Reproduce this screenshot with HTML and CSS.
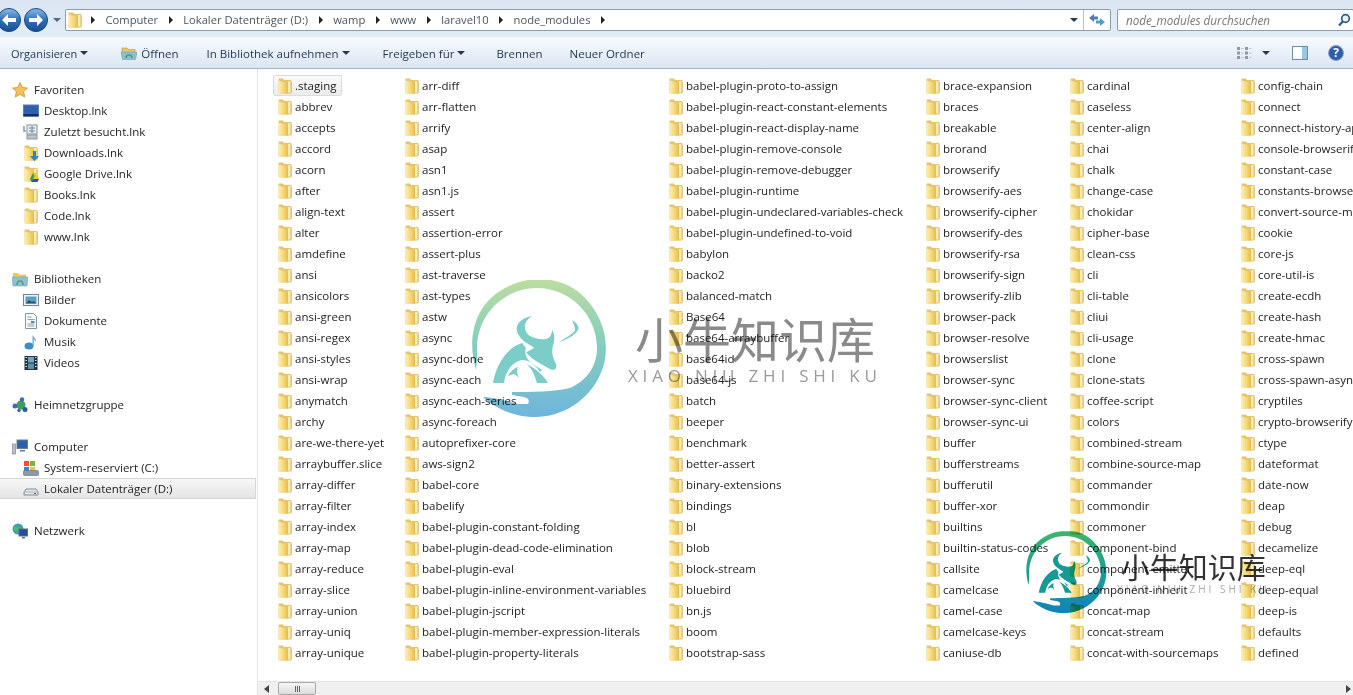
FILE: index.html
```html
<!DOCTYPE html>
<html lang="de">
<head>
	<meta charset="utf-8">
	<title>node_modules</title>
	<link rel="stylesheet" href="styles.css">
</head>
<body>
	<svg class="defs" width="0" height="0">
		<defs>
			<linearGradient id="fdBody" x1="0" y1="0" x2="1" y2="0">
				<stop offset="0" stop-color="#fbefb4"/>
				<stop offset=".5" stop-color="#f5da7c"/>
				<stop offset=".85" stop-color="#eec552"/>
				<stop offset="1" stop-color="#e2b94e"/>
			</linearGradient>
			<linearGradient id="softRing" gradientUnits="userSpaceOnUse" x1="0" y1="0" x2="0" y2="137">
				<stop offset="0" stop-color="#bcdda0"/>
				<stop offset=".45" stop-color="#84cfbd"/>
				<stop offset="1" stop-color="#6fb5dc"/>
			</linearGradient>
			<linearGradient id="deepRing" gradientUnits="userSpaceOnUse" x1="0" y1="0" x2="0" y2="137">
				<stop offset="0" stop-color="#3fb56b"/>
				<stop offset=".5" stop-color="#16a096"/>
				<stop offset="1" stop-color="#1382b8"/>
			</linearGradient>
			<linearGradient id="nav" x1="0" y1="0" x2="0" y2="1">
				<stop offset="0" stop-color="#8fbbe6"/>
				<stop offset=".5" stop-color="#2f6fb5"/>
				<stop offset="1" stop-color="#1a4f92"/>
			</linearGradient>
			<symbol id="folder" viewBox="0 0 16 16">
				<path d="M1.500 1.500c0-.6.4-1 1-1h3.500l1 1.500h6.500c.6 0 1 .4 1 1V14.500c0 .6-.4 1-1 1H2.500c-.6 0-1-.4-1-1z" fill="#e6c46a"/>
				<path d="M11 3h2.700v11.500H11z" fill="#f8ecb8"/>
				<path d="M1.500 2.500 10 4.800c.6.200 1 .6 1 1.200V15.500H2.500c-.6 0-1-.4-1-1z" fill="url(#fdBody)"/>
				<path d="M14.200 3.500v11" stroke="#d2b266" stroke-width=".8" fill="none"/>
			</symbol>
			<symbol id="markring" viewBox="0 0 137 138">
				<path d="M6 90C-3 60 3 25 35 8C60-6 95-4 115 18C135 38 142 70 130 95C118 122 90 138 62 137C42 136 25 128 13 117C22 117 36 121 48 124L58 124C60 120 58 118 54 117L42 115L42 112C60 112 85 112 100 108C118 100 127 85 127 68C127 35 100 8 67 8C34 8 7 35 7 68C7 75 7 83 6 90z"/>
			</symbol>
			<symbol id="bull" viewBox="0 0 137 138">
				<path d="M62 36C50 38 44 46 48 54C52 62 60 64 64 68C60 70 58 72 56 72C60 78 70 84 82 90C86 90 87 87 86 84C83 78 81 72 83 66C85 60 85 54 82 50C82 54 80 58 76 59C70 60 64 58 60 56C54 52 52 42 62 36z"/>
				<path d="M52 63C38 67 26 84 23 103L34 103C35 92 42 82 52 80C60 80 66 86 70 92L72 90L60 82C56 78 54 72 56 68z"/>
				<path d="M56 84C62 88 64 94 67 103L78 103C74 96 66 88 56 84z"/>
				<path d="M38 96C40 92 44 88 48 87C46 92 48 96 50 98L44 94z"/>
				<path d="M102 40C106 42 110 47 108 50C105 56 96 59 88 63C94 58 104 54 105 50C105 46 103 43 102 40z"/>
			</symbol>
		</defs>
	</svg>

	<div class="window">
		<div class="addressrow">
			<div class="navbtns">
				<svg class="navbtn" viewBox="0 0 24 24"><circle cx="12" cy="12" r="11.500" fill="url(#nav)" stroke="#174880"/><path d="M5 12l6-6v4h8v4h-8v4z" fill="#fff"/></svg>
				<svg class="navbtn" viewBox="0 0 24 24"><circle cx="12" cy="12" r="11.500" fill="url(#nav)" stroke="#174880"/><path d="M19 12l-6-6v4H5v4h8v4z" fill="#fff"/></svg>
			</div>
			<span class="caret navcaret"></span>
			<div class="address">
				<svg class="ic"><use href="#folder"/></svg>
				<div class="crumbs">
					<i class="sep"></i><span>Computer</span>
					<i class="sep"></i><span>Lokaler Datenträger (D:)</span>
					<i class="sep"></i><span>wamp</span>
					<i class="sep"></i><span>www</span>
					<i class="sep"></i><span>laravel10</span>
					<i class="sep"></i><span>node_modules</span>
					<i class="sep"></i>
				</div>
				<span class="caret dark"></span>
				<div class="refresh">
					<svg width="18" height="14" viewBox="0 0 18 14"><path d="M1 5l5-4v2.500h4v3H6V9z" fill="#4d7fae"/><path d="M17 9l-5 4v-2.500H8v-3h4V5z" fill="#4d9fc8"/></svg>
				</div>
			</div>
			<div class="search">
				<span>node_modules durchsuchen</span>
				<svg width="14" height="14" viewBox="0 0 14 14"><circle cx="8.500" cy="5.500" r="3.800" fill="#eaf3fb" stroke="#2c5c86" stroke-width="1.700"/><path d="M5.800 8.500 2 12.500" stroke="#2c5c86" stroke-width="2.200"/></svg>
			</div>
		</div>

		<div class="commandbar">
			<span class="cmd org">Organisieren <span class="caret dark"></span></span>
			<span class="cmd open">
				<svg class="ic" viewBox="0 0 16 16"><path d="M1 3h5l1 1.500h7V8H1z" fill="#e9c766" stroke="#b39440" stroke-width=".6"/><path d="M0 7h16l-1.500 7.500h-13z" fill="#8cc0d0" stroke="#6f9fae" stroke-width=".6"/><path d="M5 13c0-2 1-3 3-3s3 1 3 3" fill="none" stroke="#4e9a68" stroke-width="1.600"/></svg>
				Öffnen
			</span>
			<span class="cmd lib">In Bibliothek aufnehmen <span class="caret dark"></span></span>
			<span class="cmd share">Freigeben für <span class="caret dark"></span></span>
			<span class="cmd burn">Brennen</span>
			<span class="cmd newdir">Neuer Ordner</span>
			<div class="cmdright">
				<svg width="16" height="14" viewBox="0 0 16 14"><g fill="#8d99a4"><rect x="1" y="1" width="3" height="3"/><rect x="1" y="5.500" width="3" height="3"/><rect x="1" y="10" width="3" height="3"/><rect x="9" y="1" width="3" height="3"/><rect x="9" y="5.500" width="3" height="3"/><rect x="9" y="10" width="3" height="3"/></g><g fill="#b8c4ce"><rect x="5" y="2" width="2.500" height="1"/><rect x="5" y="6.500" width="2.500" height="1"/><rect x="5" y="11" width="2.500" height="1"/><rect x="13" y="2" width="2.500" height="1"/><rect x="13" y="6.500" width="2.500" height="1"/><rect x="13" y="11" width="2.500" height="1"/></g></svg>
				<span class="caret dark viewcaret"></span>
				<svg class="panebtn" width="16" height="14" viewBox="0 0 16 14"><rect x=".5" y=".5" width="15" height="13" fill="#fff" stroke="#6f8ba5"/><rect x="10" y="1" width="5" height="12" fill="#9ac6e6"/></svg>
				<svg class="helpbtn" width="16" height="16" viewBox="0 0 16 16"><circle cx="8" cy="8" r="7.500" fill="#2f5fa8" stroke="#8ea4cc"/><text x="8" y="12" text-anchor="middle" class="helpmark">?</text></svg>
			</div>
		</div>

		<div class="content">
			<nav class="sidebar">
				<div class="group">
					<div class="head">
						<svg class="ic" viewBox="0 0 16 16"><path d="M8 .5l2.300 5 5.200.6-3.900 3.500 1.100 5.400L8 12.300 3.300 15l1.100-5.400L.5 6.100l5.200-.6z" fill="#f5c25c" stroke="#d0893a" stroke-width=".8"/></svg>Favoriten
					</div>
					<div class="link"><svg class="ic" viewBox="0 0 16 16"><rect x=".5" y="2" width="15" height="11" fill="#2f5fb0" stroke="#5c7ea8"/><rect x=".5" y="11" width="15" height="2.500" fill="#16305f"/></svg>Desktop.lnk</div>
					<div class="link"><svg class="ic" viewBox="0 0 16 16"><rect x="4" y="1" width="10" height="9" fill="#e9eef3" stroke="#7f8f9f"/><path d="M6 4h6M6 7h6M9 2v7" stroke="#6d8296"/><rect x="4" y="11" width="10" height="4" fill="#b9c3cc" stroke="#8a97a3"/><path d="M1 2v5h2" fill="none" stroke="#8a9aa8" stroke-width="1.500"/></svg>Zuletzt besucht.lnk</div>
					<div class="link"><svg class="ic"><use href="#folder"/></svg><svg class="badge" width="9" height="10" viewBox="0 0 9 10"><path d="M3 0h3v5h3L4.500 10 0 5h3z" fill="#2e82bd"/></svg>Downloads.lnk</div>
					<div class="link"><svg class="ic"><use href="#folder"/></svg><svg class="badge" width="9" height="9" viewBox="0 0 9 9"><path d="M3 0h3l3 6H4z" fill="#f3c622"/><path d="M3 0 0 6l1.500 3 3-6z" fill="#2f9e52"/><path d="M1.500 9h6L9 6H3z" fill="#2352b8"/></svg>Google Drive.lnk</div>
					<div class="link"><svg class="ic"><use href="#folder"/></svg>Books.lnk</div>
					<div class="link"><svg class="ic"><use href="#folder"/></svg>Code.lnk</div>
					<div class="link"><svg class="ic"><use href="#folder"/></svg>www.lnk</div>
				</div>
				<div class="group">
					<div class="head">
						<svg class="ic" viewBox="0 0 16 16"><path d="M1 2h5l1 1.500h7V8H1z" fill="#e9c766"/><path d="M0 6h16l-1 9H1z" fill="#8fc0cf" stroke="#7aa8b6" stroke-width=".6"/><path d="M5 14c0-3 1-4 3-4s3 1 3 4" fill="none" stroke="#59967a" stroke-width="1.500"/></svg>Bibliotheken
					</div>
					<div class="link"><svg class="ic" viewBox="0 0 16 16"><rect x=".5" y="2.500" width="15" height="11" fill="#eef3f7" stroke="#6f8496"/><rect x="2.500" y="4.500" width="11" height="7" fill="#5f9fc4"/><path d="M2.500 11.500 6 8l3 2 2-1 2.500 2.500z" fill="#2b536c"/></svg>Bilder</div>
					<div class="link"><svg class="ic" viewBox="0 0 16 16"><path d="M2.500.5h8l3 3v12h-11z" fill="#fbfcfd" stroke="#8493a0"/><path d="M4.500 4h4M4.500 6.500h7M4.500 11h7M4.500 13h7" stroke="#8aa0b2"/><rect x="8" y="8" width="3.500" height="2" fill="#4f86b8"/></svg>Dokumente</div>
					<div class="link"><svg class="ic" viewBox="0 0 16 16"><ellipse cx="6" cy="12" rx="4.500" ry="3.500" fill="#3d8dc7"/><path d="M9.500 12V1c1 2.500 4 3 3.500 7-.5-2-2-2.500-2.200-2.500V12z" fill="#62aed8"/></svg>Musik</div>
					<div class="link"><svg class="ic" viewBox="0 0 16 16"><rect x="1.500" y="1" width="13" height="14" fill="#26323c"/><rect x="5" y="2" width="6" height="5.500" fill="#6fa7c9"/><rect x="5" y="8.500" width="6" height="5.500" fill="#5a8fb0"/><path d="M2.500 2.500h1.500M2.500 5.500h1.500M2.500 8.500h1.500M2.500 11.500h1.500M12 2.500h1.500M12 5.500h1.500M12 8.500h1.500M12 11.500h1.500" stroke="#dde5ea"/></svg>Videos</div>
				</div>
				<div class="group">
					<div class="head">
						<svg class="ic" viewBox="0 0 16 16"><circle cx="9" cy="8" r="4.500" fill="#3f9e5c"/><circle cx="3" cy="9" r="2.500" fill="#3a6db5"/><circle cx="10" cy="2.500" r="2.200" fill="#3a6db5"/><circle cx="13" cy="12.500" r="2.500" fill="#2c5a9e"/><circle cx="7" cy="13.500" r="1.800" fill="#3a6db5"/></svg>Heimnetzgruppe
					</div>
				</div>
				<div class="group">
					<div class="head">
						<svg class="ic" viewBox="0 0 16 16"><rect x="5" y="1" width="10.500" height="8.500" fill="#2d5fae" stroke="#6d7f90"/><path d="M8 11h5v1.500H8z" fill="#6c7c8a"/><rect x=".5" y="5" width="3" height="10" fill="#b6c0c9" stroke="#6f7e8b" stroke-width=".6"/></svg>Computer
					</div>
					<div class="link"><svg class="ic" viewBox="0 0 16 16"><rect x="1" y="1" width="5" height="5" fill="#e2553a"/><rect x="7" y="1" width="5" height="5" fill="#7fb23f"/><rect x="1" y="7" width="5" height="4" fill="#3e83c8"/><rect x="7" y="7" width="5" height="4" fill="#f0c33c"/><rect x=".5" y="10.500" width="15" height="5" rx="1" fill="#8d9aa5" stroke="#5f6d78" stroke-width=".6"/></svg>System-reserviert (C:)</div>
					<div class="link active"><svg class="ic" viewBox="0 0 16 16"><path d="M3 8h10l2 3v3H1v-3z" fill="#e4e8eb" stroke="#7f8a93"/><path d="M1 11h14" stroke="#aab3ba"/><rect x="11" y="12" width="2" height="1" fill="#59646d"/></svg>Lokaler Datenträger (D:)</div>
				</div>
				<div class="group">
					<div class="head">
						<svg class="ic" viewBox="0 0 16 16"><circle cx="6" cy="6" r="5.500" fill="#3b9fb5"/><path d="M2 4c2-1 3 1 5 0s2 3 0 4-3 0-5-1z" fill="#5cb36a"/><rect x="7" y="6" width="8.500" height="7" fill="#1f4f9e" stroke="#5f7082"/><path d="M10 14h3v1.500h-3z" fill="#5f7082"/></svg>Netzwerk
					</div>
				</div>
			</nav>

			<section class="listpane">
				<div class="files">
					<a class="file selected"><svg class="ic"><use href="#folder"/></svg>.staging</a>
					<a class="file"><svg class="ic"><use href="#folder"/></svg>abbrev</a>
					<a class="file"><svg class="ic"><use href="#folder"/></svg>accepts</a>
					<a class="file"><svg class="ic"><use href="#folder"/></svg>accord</a>
					<a class="file"><svg class="ic"><use href="#folder"/></svg>acorn</a>
					<a class="file"><svg class="ic"><use href="#folder"/></svg>after</a>
					<a class="file"><svg class="ic"><use href="#folder"/></svg>align-text</a>
					<a class="file"><svg class="ic"><use href="#folder"/></svg>alter</a>
					<a class="file"><svg class="ic"><use href="#folder"/></svg>amdefine</a>
					<a class="file"><svg class="ic"><use href="#folder"/></svg>ansi</a>
					<a class="file"><svg class="ic"><use href="#folder"/></svg>ansicolors</a>
					<a class="file"><svg class="ic"><use href="#folder"/></svg>ansi-green</a>
					<a class="file"><svg class="ic"><use href="#folder"/></svg>ansi-regex</a>
					<a class="file"><svg class="ic"><use href="#folder"/></svg>ansi-styles</a>
					<a class="file"><svg class="ic"><use href="#folder"/></svg>ansi-wrap</a>
					<a class="file"><svg class="ic"><use href="#folder"/></svg>anymatch</a>
					<a class="file"><svg class="ic"><use href="#folder"/></svg>archy</a>
					<a class="file"><svg class="ic"><use href="#folder"/></svg>are-we-there-yet</a>
					<a class="file"><svg class="ic"><use href="#folder"/></svg>arraybuffer.slice</a>
					<a class="file"><svg class="ic"><use href="#folder"/></svg>array-differ</a>
					<a class="file"><svg class="ic"><use href="#folder"/></svg>array-filter</a>
					<a class="file"><svg class="ic"><use href="#folder"/></svg>array-index</a>
					<a class="file"><svg class="ic"><use href="#folder"/></svg>array-map</a>
					<a class="file"><svg class="ic"><use href="#folder"/></svg>array-reduce</a>
					<a class="file"><svg class="ic"><use href="#folder"/></svg>array-slice</a>
					<a class="file"><svg class="ic"><use href="#folder"/></svg>array-union</a>
					<a class="file"><svg class="ic"><use href="#folder"/></svg>array-uniq</a>
					<a class="file"><svg class="ic"><use href="#folder"/></svg>array-unique</a>

					<a class="file"><svg class="ic"><use href="#folder"/></svg>arr-diff</a>
					<a class="file"><svg class="ic"><use href="#folder"/></svg>arr-flatten</a>
					<a class="file"><svg class="ic"><use href="#folder"/></svg>arrify</a>
					<a class="file"><svg class="ic"><use href="#folder"/></svg>asap</a>
					<a class="file"><svg class="ic"><use href="#folder"/></svg>asn1</a>
					<a class="file"><svg class="ic"><use href="#folder"/></svg>asn1.js</a>
					<a class="file"><svg class="ic"><use href="#folder"/></svg>assert</a>
					<a class="file"><svg class="ic"><use href="#folder"/></svg>assertion-error</a>
					<a class="file"><svg class="ic"><use href="#folder"/></svg>assert-plus</a>
					<a class="file"><svg class="ic"><use href="#folder"/></svg>ast-traverse</a>
					<a class="file"><svg class="ic"><use href="#folder"/></svg>ast-types</a>
					<a class="file"><svg class="ic"><use href="#folder"/></svg>astw</a>
					<a class="file"><svg class="ic"><use href="#folder"/></svg>async</a>
					<a class="file"><svg class="ic"><use href="#folder"/></svg>async-done</a>
					<a class="file"><svg class="ic"><use href="#folder"/></svg>async-each</a>
					<a class="file"><svg class="ic"><use href="#folder"/></svg>async-each-series</a>
					<a class="file"><svg class="ic"><use href="#folder"/></svg>async-foreach</a>
					<a class="file"><svg class="ic"><use href="#folder"/></svg>autoprefixer-core</a>
					<a class="file"><svg class="ic"><use href="#folder"/></svg>aws-sign2</a>
					<a class="file"><svg class="ic"><use href="#folder"/></svg>babel-core</a>
					<a class="file"><svg class="ic"><use href="#folder"/></svg>babelify</a>
					<a class="file"><svg class="ic"><use href="#folder"/></svg>babel-plugin-constant-folding</a>
					<a class="file"><svg class="ic"><use href="#folder"/></svg>babel-plugin-dead-code-elimination</a>
					<a class="file"><svg class="ic"><use href="#folder"/></svg>babel-plugin-eval</a>
					<a class="file"><svg class="ic"><use href="#folder"/></svg>babel-plugin-inline-environment-variables</a>
					<a class="file"><svg class="ic"><use href="#folder"/></svg>babel-plugin-jscript</a>
					<a class="file"><svg class="ic"><use href="#folder"/></svg>babel-plugin-member-expression-literals</a>
					<a class="file"><svg class="ic"><use href="#folder"/></svg>babel-plugin-property-literals</a>

					<a class="file"><svg class="ic"><use href="#folder"/></svg>babel-plugin-proto-to-assign</a>
					<a class="file"><svg class="ic"><use href="#folder"/></svg>babel-plugin-react-constant-elements</a>
					<a class="file"><svg class="ic"><use href="#folder"/></svg>babel-plugin-react-display-name</a>
					<a class="file"><svg class="ic"><use href="#folder"/></svg>babel-plugin-remove-console</a>
					<a class="file"><svg class="ic"><use href="#folder"/></svg>babel-plugin-remove-debugger</a>
					<a class="file"><svg class="ic"><use href="#folder"/></svg>babel-plugin-runtime</a>
					<a class="file"><svg class="ic"><use href="#folder"/></svg>babel-plugin-undeclared-variables-check</a>
					<a class="file"><svg class="ic"><use href="#folder"/></svg>babel-plugin-undefined-to-void</a>
					<a class="file"><svg class="ic"><use href="#folder"/></svg>babylon</a>
					<a class="file"><svg class="ic"><use href="#folder"/></svg>backo2</a>
					<a class="file"><svg class="ic"><use href="#folder"/></svg>balanced-match</a>
					<a class="file"><svg class="ic"><use href="#folder"/></svg>Base64</a>
					<a class="file"><svg class="ic"><use href="#folder"/></svg>base64-arraybuffer</a>
					<a class="file"><svg class="ic"><use href="#folder"/></svg>base64id</a>
					<a class="file"><svg class="ic"><use href="#folder"/></svg>base64-js</a>
					<a class="file"><svg class="ic"><use href="#folder"/></svg>batch</a>
					<a class="file"><svg class="ic"><use href="#folder"/></svg>beeper</a>
					<a class="file"><svg class="ic"><use href="#folder"/></svg>benchmark</a>
					<a class="file"><svg class="ic"><use href="#folder"/></svg>better-assert</a>
					<a class="file"><svg class="ic"><use href="#folder"/></svg>binary-extensions</a>
					<a class="file"><svg class="ic"><use href="#folder"/></svg>bindings</a>
					<a class="file"><svg class="ic"><use href="#folder"/></svg>bl</a>
					<a class="file"><svg class="ic"><use href="#folder"/></svg>blob</a>
					<a class="file"><svg class="ic"><use href="#folder"/></svg>block-stream</a>
					<a class="file"><svg class="ic"><use href="#folder"/></svg>bluebird</a>
					<a class="file"><svg class="ic"><use href="#folder"/></svg>bn.js</a>
					<a class="file"><svg class="ic"><use href="#folder"/></svg>boom</a>
					<a class="file"><svg class="ic"><use href="#folder"/></svg>bootstrap-sass</a>

					<a class="file"><svg class="ic"><use href="#folder"/></svg>brace-expansion</a>
					<a class="file"><svg class="ic"><use href="#folder"/></svg>braces</a>
					<a class="file"><svg class="ic"><use href="#folder"/></svg>breakable</a>
					<a class="file"><svg class="ic"><use href="#folder"/></svg>brorand</a>
					<a class="file"><svg class="ic"><use href="#folder"/></svg>browserify</a>
					<a class="file"><svg class="ic"><use href="#folder"/></svg>browserify-aes</a>
					<a class="file"><svg class="ic"><use href="#folder"/></svg>browserify-cipher</a>
					<a class="file"><svg class="ic"><use href="#folder"/></svg>browserify-des</a>
					<a class="file"><svg class="ic"><use href="#folder"/></svg>browserify-rsa</a>
					<a class="file"><svg class="ic"><use href="#folder"/></svg>browserify-sign</a>
					<a class="file"><svg class="ic"><use href="#folder"/></svg>browserify-zlib</a>
					<a class="file"><svg class="ic"><use href="#folder"/></svg>browser-pack</a>
					<a class="file"><svg class="ic"><use href="#folder"/></svg>browser-resolve</a>
					<a class="file"><svg class="ic"><use href="#folder"/></svg>browserslist</a>
					<a class="file"><svg class="ic"><use href="#folder"/></svg>browser-sync</a>
					<a class="file"><svg class="ic"><use href="#folder"/></svg>browser-sync-client</a>
					<a class="file"><svg class="ic"><use href="#folder"/></svg>browser-sync-ui</a>
					<a class="file"><svg class="ic"><use href="#folder"/></svg>buffer</a>
					<a class="file"><svg class="ic"><use href="#folder"/></svg>bufferstreams</a>
					<a class="file"><svg class="ic"><use href="#folder"/></svg>bufferutil</a>
					<a class="file"><svg class="ic"><use href="#folder"/></svg>buffer-xor</a>
					<a class="file"><svg class="ic"><use href="#folder"/></svg>builtins</a>
					<a class="file"><svg class="ic"><use href="#folder"/></svg>builtin-status-codes</a>
					<a class="file"><svg class="ic"><use href="#folder"/></svg>callsite</a>
					<a class="file"><svg class="ic"><use href="#folder"/></svg>camelcase</a>
					<a class="file"><svg class="ic"><use href="#folder"/></svg>camel-case</a>
					<a class="file"><svg class="ic"><use href="#folder"/></svg>camelcase-keys</a>
					<a class="file"><svg class="ic"><use href="#folder"/></svg>caniuse-db</a>

					<a class="file"><svg class="ic"><use href="#folder"/></svg>cardinal</a>
					<a class="file"><svg class="ic"><use href="#folder"/></svg>caseless</a>
					<a class="file"><svg class="ic"><use href="#folder"/></svg>center-align</a>
					<a class="file"><svg class="ic"><use href="#folder"/></svg>chai</a>
					<a class="file"><svg class="ic"><use href="#folder"/></svg>chalk</a>
					<a class="file"><svg class="ic"><use href="#folder"/></svg>change-case</a>
					<a class="file"><svg class="ic"><use href="#folder"/></svg>chokidar</a>
					<a class="file"><svg class="ic"><use href="#folder"/></svg>cipher-base</a>
					<a class="file"><svg class="ic"><use href="#folder"/></svg>clean-css</a>
					<a class="file"><svg class="ic"><use href="#folder"/></svg>cli</a>
					<a class="file"><svg class="ic"><use href="#folder"/></svg>cli-table</a>
					<a class="file"><svg class="ic"><use href="#folder"/></svg>cliui</a>
					<a class="file"><svg class="ic"><use href="#folder"/></svg>cli-usage</a>
					<a class="file"><svg class="ic"><use href="#folder"/></svg>clone</a>
					<a class="file"><svg class="ic"><use href="#folder"/></svg>clone-stats</a>
					<a class="file"><svg class="ic"><use href="#folder"/></svg>coffee-script</a>
					<a class="file"><svg class="ic"><use href="#folder"/></svg>colors</a>
					<a class="file"><svg class="ic"><use href="#folder"/></svg>combined-stream</a>
					<a class="file"><svg class="ic"><use href="#folder"/></svg>combine-source-map</a>
					<a class="file"><svg class="ic"><use href="#folder"/></svg>commander</a>
					<a class="file"><svg class="ic"><use href="#folder"/></svg>commondir</a>
					<a class="file"><svg class="ic"><use href="#folder"/></svg>commoner</a>
					<a class="file"><svg class="ic"><use href="#folder"/></svg>component-bind</a>
					<a class="file"><svg class="ic"><use href="#folder"/></svg>component-emitter</a>
					<a class="file"><svg class="ic"><use href="#folder"/></svg>component-inherit</a>
					<a class="file"><svg class="ic"><use href="#folder"/></svg>concat-map</a>
					<a class="file"><svg class="ic"><use href="#folder"/></svg>concat-stream</a>
					<a class="file"><svg class="ic"><use href="#folder"/></svg>concat-with-sourcemaps</a>

					<a class="file"><svg class="ic"><use href="#folder"/></svg>config-chain</a>
					<a class="file"><svg class="ic"><use href="#folder"/></svg>connect</a>
					<a class="file"><svg class="ic"><use href="#folder"/></svg>connect-history-api-fallback</a>
					<a class="file"><svg class="ic"><use href="#folder"/></svg>console-browserify</a>
					<a class="file"><svg class="ic"><use href="#folder"/></svg>constant-case</a>
					<a class="file"><svg class="ic"><use href="#folder"/></svg>constants-browserify</a>
					<a class="file"><svg class="ic"><use href="#folder"/></svg>convert-source-map</a>
					<a class="file"><svg class="ic"><use href="#folder"/></svg>cookie</a>
					<a class="file"><svg class="ic"><use href="#folder"/></svg>core-js</a>
					<a class="file"><svg class="ic"><use href="#folder"/></svg>core-util-is</a>
					<a class="file"><svg class="ic"><use href="#folder"/></svg>create-ecdh</a>
					<a class="file"><svg class="ic"><use href="#folder"/></svg>create-hash</a>
					<a class="file"><svg class="ic"><use href="#folder"/></svg>create-hmac</a>
					<a class="file"><svg class="ic"><use href="#folder"/></svg>cross-spawn</a>
					<a class="file"><svg class="ic"><use href="#folder"/></svg>cross-spawn-async</a>
					<a class="file"><svg class="ic"><use href="#folder"/></svg>cryptiles</a>
					<a class="file"><svg class="ic"><use href="#folder"/></svg>crypto-browserify</a>
					<a class="file"><svg class="ic"><use href="#folder"/></svg>ctype</a>
					<a class="file"><svg class="ic"><use href="#folder"/></svg>dateformat</a>
					<a class="file"><svg class="ic"><use href="#folder"/></svg>date-now</a>
					<a class="file"><svg class="ic"><use href="#folder"/></svg>deap</a>
					<a class="file"><svg class="ic"><use href="#folder"/></svg>debug</a>
					<a class="file"><svg class="ic"><use href="#folder"/></svg>decamelize</a>
					<a class="file"><svg class="ic"><use href="#folder"/></svg>deep-eql</a>
					<a class="file"><svg class="ic"><use href="#folder"/></svg>deep-equal</a>
					<a class="file"><svg class="ic"><use href="#folder"/></svg>deep-is</a>
					<a class="file"><svg class="ic"><use href="#folder"/></svg>defaults</a>
					<a class="file"><svg class="ic"><use href="#folder"/></svg>defined</a>
				</div>
				<div class="hscroll">
					<svg width="6" height="8" viewBox="0 0 6 8"><path d="M5 0v8L0 4z" fill="#444"/></svg>
					<div class="thumb"><i></i><i></i><i></i></div>
					<svg class="rightarrow" width="6" height="8" viewBox="0 0 6 8"><path d="M0 0v8l5-4z" fill="#444"/></svg>
				</div>
			</section>
		</div>
	</div>

	<!-- watermarks lie over the list -->
	<div class="wm wm-big">
		<svg width="137" height="138" viewBox="0 0 137 138">
			<use href="#markring" fill="url(#softRing)"/>
			<use href="#bull" fill="#7cccc8"/>
		</svg>
		<div class="wm-text">
			<div class="wm-cn">小牛知识库</div>
			<div class="wm-en">XIAO NIU ZHI SHI KU</div>
		</div>
	</div>
	<div class="wm wm-small">
		<svg width="82" height="83" viewBox="0 0 137 138">
			<use href="#markring" fill="url(#deepRing)"/>
			<use href="#bull" fill="#169a94"/>
		</svg>
		<div class="wm-text">
			<div class="wm-cn">小牛知识库</div>
			<div class="wm-en">XIAO NIU ZHI SHI KU</div>
		</div>
	</div>
</body>
</html>
```

FILE: styles.css
```css
*{
	margin: 0px;
	padding: 0px;
	box-sizing: border-box;
}
html,body{
	height: 100%;
	overflow: hidden;
}
body{
	font-family: "Open Sans", "Noto Sans", sans-serif;
	font-size: 11.5px;
	color: #222;
	background: #fff;
}
.defs{
	display: block;
	height: 0px;
}
.window{
	height: 695px;
	display: flex;
	flex-direction: column;
}
.ic{
	width: 16px;
	height: 16px;
	flex: none;
}
.caret{
	display: inline-block;
	width: 0px;
	height: 0px;
	border-left: 4px solid transparent;
	border-right: 4px solid transparent;
	border-top: 4px solid #4a6a8c;
}
.caret.dark{
	border-top-color: #26384c;
}

/* address row */
.addressrow{
	height: 38px;
	flex: none;
	display: flex;
	align-items: center;
	padding-top: 2px;
	background: linear-gradient(#dbe6f2, #e2ecf6);
	border-bottom: 1px solid #f4f8fc;
}
.navbtns{
	display: flex;
	gap: 3px;
	margin-left: -3px;
	flex: none;
}
.navbtn{
	width: 24px;
	height: 24px;
}
.navcaret{
	margin: 0px 4px 0px 5px;
	flex: none;
}
.address{
	flex: 1;
	height: 22px;
	display: flex;
	align-items: center;
	background: #fff;
	border: 1px solid #8d9bab;
	border-radius: 2px;
	padding-left: 1px;
	color: #4a5560;
	font-size: 11.2px;
}
.crumbs{
	flex: 1;
	display: flex;
	align-items: center;
	gap: 10.5px;
	padding-left: 8px;
}
.sep{
	width: 0px;
	height: 0px;
	border-top: 4px solid transparent;
	border-bottom: 4px solid transparent;
	border-left: 4px solid #222;
}
.refresh{
	width: 27px;
	height: 100%;
	margin-left: 5px;
	border-left: 1px solid #b4c1ce;
	display: flex;
	align-items: center;
	justify-content: center;
}
.search{
	width: 237px;
	height: 22px;
	margin-left: 6px;
	margin-right: -1px;
	flex: none;
	background: #fff;
	border: 1px solid #8d9bab;
	border-radius: 2px;
	display: flex;
	align-items: center;
	justify-content: space-between;
	padding: 0px 2px 0px 8px;
	font-style: italic;
	color: #777;
	font-size: 11.7px;
}

/* command bar */
.commandbar{
	height: 31px;
	flex: none;
	display: flex;
	align-items: center;
	padding-left: 11px;
	background: linear-gradient(#f6fafd, #e9f0f8 50%, #dbe6f2);
	border-bottom: 1px solid #a3b5c7;
	color: #1f3550;
}
.cmd{
	display: flex;
	align-items: center;
	gap: 3px;
}
.org{
	font-size: 11px;
}
.open{
	margin-left: 33px;
	gap: 4px;
}
.lib{
	margin-left: 28px;
}
.share{
	margin-left: 33px;
}
.burn{
	margin-left: 31px;
}
.newdir{
	margin-left: 27px;
}
.cmdright{
	margin-left: auto;
	display: flex;
	align-items: center;
	padding-right: 9px;
}
.viewcaret{
	margin-left: 10px;
}
.panebtn{
	margin-left: 22px;
}
.helpbtn{
	margin-left: 20px;
}
.helpmark{
	font-size: 12px;
	font-weight: 700;
	fill: #fff;
}

/* left tree */
.content{
	flex: 1;
	display: flex;
	min-height: 0px;
}
.sidebar{
	width: 258px;
	flex: none;
	padding-top: 10px;
	border-right: 1px solid #dde7f2;
}
.group{
	margin-bottom: 21px;
}
.head, .link{
	height: 21px;
	display: flex;
	align-items: center;
	gap: 5px;
	white-space: nowrap;
	position: relative;
}
.head{
	padding-left: 12px;
	gap: 6px;
}
.link{
	padding-left: 23px;
}
.badge{
	position: absolute;
	left: 30px;
	bottom: 2px;
}
.active{
	height: 21px;
	width: 256px;
	background: linear-gradient(#f7f7f7, #e4e4e4);
	border: 1px solid #d6d6d6;
	border-left: none;
	padding-left: 23px;
}

/* file list */
.listpane{
	flex: 1;
	min-width: 0px;
	display: flex;
	flex-direction: column;
}
.files{
	flex: 1;
	min-height: 0px;
	overflow: hidden;
	padding: 6px 0px 0px 15px;
	display: grid;
	grid-auto-flow: column;
	grid-template-rows: repeat(28, 21px);
	grid-template-columns: 127px 264px 257px 144px 171px 200px;
}
.file{
	justify-self: start;
	height: 21px;
	display: flex;
	align-items: center;
	gap: 2px;
	padding: 0px 6px 0px 4px;
	white-space: nowrap;
}
.selected{
	background: linear-gradient(#fafafa, #ececec);
	border: 1px solid #dcdcdc;
	border-radius: 2px;
	padding: 0px 5px 0px 3px;
}
.hscroll{
	height: 14px;
	flex: none;
	display: flex;
	align-items: center;
	padding-left: 6px;
	background: #f0f0f0;
	border-top: 1px solid #e4e4e4;
}
.thumb{
	width: 38px;
	height: 13px;
	margin-left: 8px;
	display: flex;
	align-items: center;
	justify-content: center;
	gap: 1px;
	background: linear-gradient(#f6f6f6, #dcdcdc);
	border: 1px solid #a9a9a9;
	border-radius: 2px;
}
.thumb i{
	width: 1px;
	height: 6px;
	background: #666;
}
.rightarrow{
	margin-left: auto;
	margin-right: 1px;
}

/* watermarks */
.wm{
	position: absolute;
	display: flex;
	align-items: center;
	pointer-events: none;
	mix-blend-mode: multiply;
}
.wm-big{
	left: 470px;
	top: 280px;
	gap: 21px;
}
.wm-small{
	left: 1025px;
	top: 531px;
	gap: 10px;
}
.wm-text{
	font-family: "Noto Sans CJK SC", sans-serif;
	text-align: center;
}
.wm-big .wm-cn{
	font-size: 48px;
	line-height: 54px;
	color: #8a8a8a;
}
.wm-big .wm-en{
	font-family: "Open Sans", sans-serif;
	font-size: 17px;
	line-height: 24px;
	letter-spacing: 4.8px;
	color: #9a9a9a;
}
.wm-small .wm-cn{
	font-size: 29px;
	line-height: 32px;
	color: #333;
}
.wm-small .wm-en{
	font-family: "Open Sans", sans-serif;
	font-size: 10px;
	line-height: 14px;
	letter-spacing: 3px;
	color: #aaa;
}
```
